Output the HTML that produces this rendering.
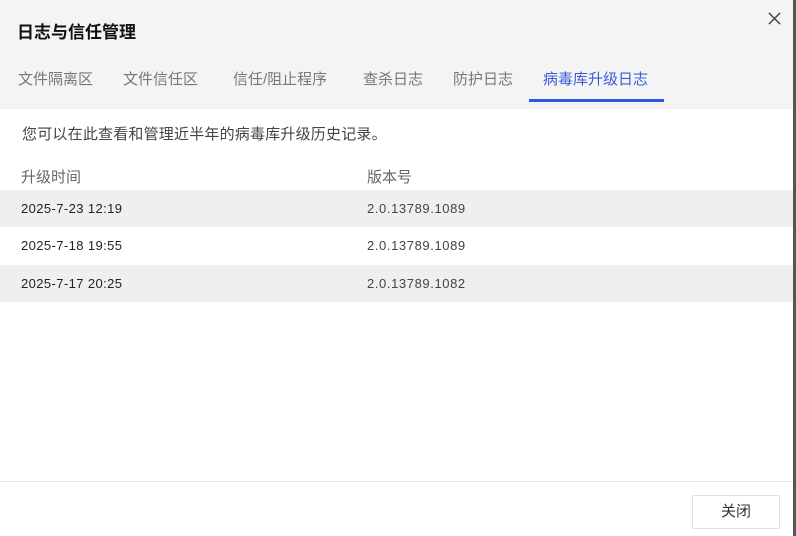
<!DOCTYPE html>
<html><head><meta charset="utf-8"><style>
*{margin:0;padding:0;box-sizing:border-box}
body{width:796px;height:536px;background:#fff;font-family:"Liberation Sans","Noto Sans CJK SC",sans-serif;position:relative;overflow:hidden}
.hd{position:absolute;left:0;top:0;width:793px;height:109px;background:#f4f4f4}
.title{position:absolute;left:17px;top:18px;font-size:17px;font-weight:bold;color:#111}
.x{position:absolute;left:767px;top:11px;width:15px;height:15px}
.tab{position:absolute;top:68px;font-size:15px;color:#777}
.ul{position:absolute;left:529px;top:99px;width:135px;height:3px;background:#2a5be8}
.edge{position:absolute;left:793px;top:0;width:3px;height:536px;background:#555}
.desc{position:absolute;left:22px;top:123px;font-size:15px;color:#444;letter-spacing:0.2px}
.th{position:absolute;top:166px;font-size:15px;color:#666}
.row{position:absolute;left:0;width:793px;height:37px}
.row span{position:absolute;top:11px;font-size:13px;color:#222;letter-spacing:0.4px}
.g{background:#efefef}
.foot{position:absolute;left:0;top:481px;width:793px;height:1px;background:#e2e2e2}
.btn{position:absolute;left:692px;top:495px;width:88px;height:34px;border:1px solid #e0e0e0;border-radius:2px;background:#fff;font-size:15px;color:#333;text-align:center;line-height:32px}
</style></head><body>
<div class="hd"></div>
<div class="title">日志与信任管理</div>
<svg class="x" viewBox="0 0 16 16"><path d="M2 2L14 14M14 2L2 14" stroke="#444" stroke-width="1.6"/></svg>
<div class="tab" style="left:18px">文件隔离区</div>
<div class="tab" style="left:123px">文件信任区</div>
<div class="tab" style="left:233px">信任/阻止程序</div>
<div class="tab" style="left:363px">查杀日志</div>
<div class="tab" style="left:453px">防护日志</div>
<div class="tab" style="left:543px;color:#3b5bd6">病毒库升级日志</div>
<div class="ul"></div>
<div class="desc">您可以在此查看和管理近半年的病毒库升级历史记录。</div>
<div class="th" style="left:21px">升级时间</div>
<div class="th" style="left:367px">版本号</div>
<div class="row g" style="top:190px"><span style="left:21px">2025-7-23 12:19</span><span style="left:367px;color:#444;letter-spacing:0.6px">2.0.13789.1089</span></div>
<div class="row" style="top:227px"><span style="left:21px">2025-7-18 19:55</span><span style="left:367px;color:#444;letter-spacing:0.6px">2.0.13789.1089</span></div>
<div class="row g" style="top:265px"><span style="left:21px">2025-7-17 20:25</span><span style="left:367px;color:#444;letter-spacing:0.6px">2.0.13789.1082</span></div>
<div class="foot"></div>
<div class="btn">关闭</div>
<div class="edge"></div>
</body></html>
